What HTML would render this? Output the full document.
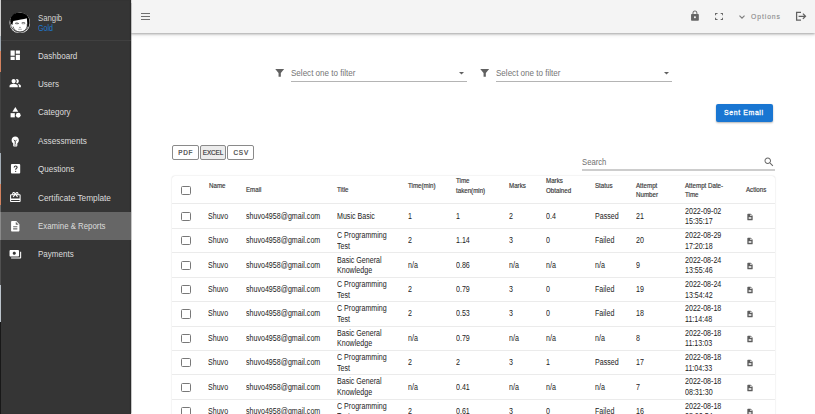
<!DOCTYPE html>
<html><head><meta charset="utf-8">
<style>
*{margin:0;padding:0;box-sizing:border-box}
html,body{width:815px;height:414px;overflow:hidden;background:#fff;font-family:"Liberation Sans",sans-serif}
.a{position:absolute}
#side{position:absolute;left:0;top:0;width:131px;height:414px;background:#353535;box-shadow:inset -1px 0 1px rgba(0,0,0,.2),.6px 0 1px rgba(0,0,0,.22);z-index:5}
#side .hdiv{position:absolute;left:0;top:40px;width:131px;height:1px;background:#404040}
.nav{position:absolute;left:0;width:131px;height:28.4px}
.nav.sel{background:#666}
.nav span{position:absolute;left:37.7px;top:.35px;line-height:28.4px;font-size:9.3px;color:#dcdcdc;white-space:nowrap;transform:scaleX(.865);transform-origin:0 0}
.nav svg{position:absolute}
#hdr{position:absolute;left:131px;top:0;width:684px;height:32.6px;background:#f4f4f4;box-shadow:0 1.3px 2.4px rgba(0,0,0,.32),0 2px 5px rgba(0,0,0,.08)}
.t{position:absolute;font-size:8.3px;line-height:10.4px;color:#222;white-space:nowrap;transform:scaleX(.855);transform-origin:0 0}
.th{position:absolute;font-size:6.5px;line-height:9.2px;color:#333;font-weight:normal;-webkit-text-stroke:.18px #4a4a4a;margin-top:.3px;white-space:nowrap;transform:scaleX(.95);transform-origin:0 0}
.hl{position:absolute;left:172px;width:603px;height:1px;background:#ebebeb}
.cb{position:absolute;width:9.4px;height:9.1px;border:1.25px solid #787878;border-radius:1.5px}
.ic{position:absolute}
#paper{position:absolute;left:171.5px;top:175.8px;width:603.7px;height:260px;border-radius:3px;background:#fff;box-shadow:0 0 1.5px rgba(0,0,0,.22)}
.sel1{position:absolute;font-size:8.7px;color:#757575;white-space:nowrap;transform:scaleX(.927);transform-origin:0 0}
.ul{position:absolute;height:1px;background:#b4b4b4}
.xb{position:absolute;top:145px;height:14.6px;border:1px solid #8a8a8a;border-radius:2px;font-size:6.3px;line-height:14.2px;text-align:center;color:#444;font-weight:bold}
</style></head><body>
<div id="side">
  <svg class="a" style="left:8.7px;top:11.8px;width:21.6px;height:21.6px" viewBox="0 0 40 40">
    <circle cx="20" cy="20" r="19.2" fill="#f2f2f2"/>
    <circle cx="20" cy="20" r="17.6" fill="#fff" stroke="#1a1a1a" stroke-width="1.4"/>
    <path d="M2.5 14 C4 5 11 1.5 20 1.5 C30 1.5 37 7 37.5 16 L37 26 L34 27 C34 21 33.5 15 33 11.5 C27 13 18 15 8 16.5 C7 19 6.5 21 6.5 24 L4 22 Z" fill="#000"/>
    <path d="M11.5 21 q3 -1.2 6.5 .3 M23.5 20.5 q3.3 -1.2 6.5 .2" fill="none" stroke="#2a2a2a" stroke-width="1.8"/>
    <path d="M12.5 22.6 h4.5 M24.5 22.4 h4.5" stroke="#999" stroke-width=".9"/>
    <path d="M18.6 28.5 h3.4" stroke="#555" stroke-width="1.1"/>
    <path d="M17 32 h6.8" stroke="#777" stroke-width="1.2"/>
    <path d="M33 22 l3.5 1 -.5 4 -3 1z" fill="#222"/>
    <path d="M7.5 27 C9 33 14 37 20.5 37 C27 37 32 33 33.5 27" fill="none" stroke="#222" stroke-width="1.3"/>
  </svg>
  <div class="a" style="left:37.8px;top:12.9px;font-size:8.7px;color:#d4d4d4;transform:scaleX(.894);transform-origin:0 0">Sangib</div>
  <div class="a" style="left:37.6px;top:22.6px;font-size:8.3px;color:#1e78d0;transform:scaleX(.86);transform-origin:0 0">Gold</div>
  <div class="hdiv"></div>
  <div class="a" style="left:0;top:0;width:1px;height:36px;background:#cfcfcf"></div>
  <div class="a" style="left:0;top:36px;width:1px;height:15px;background:#a3adb6"></div>
  <div class="a" style="left:0;top:51px;width:1px;height:21px;background:#d4825f"></div>
  <div class="a" style="left:0;top:153px;width:1px;height:31px;background:#a3adb6"></div>
  <div class="a" style="left:0;top:184px;width:1px;height:21px;background:#d4825f"></div>
  <div class="a" style="left:0;top:205px;width:1px;height:7px;background:#6a6a6a"></div>
  <div class="a" style="left:0;top:72px;width:1px;height:81px;background:#424242"></div>
  <div class="a" style="left:0;top:212px;width:1px;height:28px;background:#8a8a8a;z-index:3"></div>
  <div class="a" style="left:0;top:240px;width:1px;height:45px;background:#505050"></div>
  <div class="a" style="left:0;top:285px;width:1px;height:37px;background:#bcc4cc"></div>
  <div class="a" style="left:0;top:322px;width:1px;height:92px;background:#181818"></div>

  <div class="nav" style="top:41.2px"><svg style="left:9.1px;top:7.9px;width:12.5px;height:12.5px" viewBox="0 0 24 24"><path fill="#fff" d="M3 13h8V3H3v10zm0 8h8v-6H3v6zm10 0h8V11h-8v10zm0-18v6h8V3h-8z"/></svg><span>Dashboard</span></div>
  <div class="nav" style="top:69.6px"><svg style="left:9.3px;top:7.8px;width:12.4px;height:12.4px" viewBox="0 0 24 24"><path fill="#fff" d="M16.67 13.13C18.04 14.06 19 15.32 19 17v3h4v-3c0-2.18-3.57-3.47-6.33-3.87zM15 12c2.21 0 4-1.79 4-4s-1.79-4-4-4c-.47 0-.91.1-1.33.24C14.5 5.27 15 6.58 15 8s-.5 2.73-1.33 3.76c.42.14.86.24 1.330.24zM9 12c2.21 0 4-1.79 4-4s-1.79-4-4-4-4 1.79-4 4 1.79 4 4 4zM9 13c-2.67 0-8 1.34-8 4v3h16v-3c0-2.66-5.33-4-8-4z"/></svg><span>Users</span></div>
  <div class="nav" style="top:98px"><svg style="left:8.8px;top:7.8px;width:12.7px;height:12.7px" viewBox="0 0 24 24"><path fill="#fff" d="M12 2l-5.5 9h11z"/><circle fill="#fff" cx="17.5" cy="17.5" r="4.5"/><path fill="#fff" d="M3 13.5h8v8H3z"/></svg><span>Category</span></div>
  <div class="nav" style="top:126.4px"><svg style="left:9.3px;top:8.2px;width:12.5px;height:12.5px" viewBox="0 0 24 24"><path fill="#fff" d="M12 3c-3.9 0-7 3.1-7 7 0 2.4 1.2 4.5 3 5.7V20c0 1.1.9 2 2 2h4c1.1 0 2-.9 2-2v-4.3c1.8-1.3 3-3.4 3-5.7 0-3.9-3.1-7-7-7z"/><path fill="none" stroke="#353535" stroke-width="1.7" d="M9.4 9.2l2.6 3.2 2.6-3.2M12 12.4v5"/><path stroke="#353535" stroke-width="1.1" d="M9.5 19.3h5"/></svg><span style="transform:scaleX(.885)">Assessments</span></div>
  <div class="nav" style="top:154.8px"><svg style="left:9.6px;top:8.7px;width:11.4px;height:11.4px" viewBox="0 0 24 24"><rect x="2" y="2" width="19.5" height="20" rx="2" fill="#fff"/><path fill="none" stroke="#353535" stroke-width="2.3" d="M8.8 9.4c0-1.9 1.4-3.2 3.1-3.2 1.8 0 3.1 1.2 3.1 2.8 0 2.3-3.1 2.4-3.1 5"/><circle cx="11.9" cy="17.6" r="1.35" fill="#353535"/></svg><span>Questions</span></div>
  <div class="nav" style="top:183.2px"><svg style="left:8.8px;top:8.0px;width:12.7px;height:12.7px" viewBox="0 0 24 24"><path fill="#fff" d="M20 6h-2.18c.11-.31.18-.65.18-1 0-1.66-1.34-3-3-3-1.05 0-1.96.54-2.5 1.35l-.5.67-.5-.68C10.96 2.54 10.05 2 9 2 7.34 2 6 3.34 6 5c0 .35.07.69.18 1H4c-1.11 0-1.99.89-1.99 2L2 19c0 1.11.89 2 2 2h16c1.11 0 2-.89 2-2V8c0-1.11-.89-2-2-2zm-5-2c.55 0 1 .45 1 1s-.45 1-1 1-1-.45-1-1 .45-1 1-1zM9 4c.55 0 1 .45 1 1s-.45 1-1 1-1-.45-1-1 .45-1 1-1zm11 15H4v-2h16v2zm0-5H4V8h5.08L7 10.83 8.62 12 11 8.76l1-1.36 1 1.36L15.38 12 17 10.83 14.92 8H20v6z"/></svg><span style="transform:scaleX(.89)">Certificate Template</span></div>
  <div class="nav sel" style="top:211.6px"><svg style="left:9px;top:8.1px;width:12.5px;height:12.5px" viewBox="0 0 24 24"><path fill="#fff" d="M14 2H6c-1.1 0-1.99.9-1.99 2L4 20c0 1.1.89 2 1.99 2H18c1.1 0 2-.9 2-2V8l-6-6zm2 16H8v-2h8v2zm0-4H8v-2h8v2zm-3-5V3.5L18.5 9H13z"/></svg><span style="transform:scaleX(.843)">Examine &amp; Reports</span></div>
  <div class="nav" style="top:240px"><svg style="left:8.9px;top:8.1px;width:12.7px;height:12.7px" viewBox="0 0 24 24"><path fill="#fff" d="M19 14V6c0-1.1-.9-2-2-2H3c-1.1 0-2 .9-2 2v8c0 1.1.9 2 2 2h14c1.1 0 2-.9 2-2zm-9-1c-1.66 0-3-1.34-3-3s1.34-3 3-3 3 1.34 3 3-1.34 3-3 3zm13-6v11c0 1.1-.9 2-2 2H4v-2h17V7h2z"/></svg><span>Payments</span></div>
</div>

<div id="hdr">
  <svg class="a" style="left:10px;top:12px;width:9.4px;height:8px" viewBox="0 0 9.4 8"><path stroke="#707070" stroke-width="1.15" d="M0 1.5h9.4M0 4.5h9.4M0 7.5h9.4"/></svg>
  <!-- lock -->
  <svg class="a" style="left:557.5px;top:10.3px;width:11.9px;height:11.7px" viewBox="0 0 24 24"><path fill="#666" d="M18 8h-1V6c0-2.76-2.24-5-5-5S7 3.24 7 6v2H6c-1.1 0-2 .9-2 2v10c0 1.1.9 2 2 2h12c1.1 0 2-.9 2-2V10c0-1.1-.9-2-2-2zm-6 9c-1.1 0-2-.9-2-2s.9-2 2-2 2 .9 2 2-.9 2-2 2zm3.1-9H8.9V6c0-1.71 1.39-3.1 3.1-3.1 1.71 0 3.1 1.39 3.1 3.1v2z"/></svg>
  <!-- fullscreen -->
  <svg class="a" style="left:583.8px;top:12.9px;width:8.2px;height:7px" viewBox="0 0 8.2 7"><path fill="none" stroke="#6a6a6a" stroke-width="1.1" d="M.55 2.3V.55h2M5.7.55h1.95v1.75M7.65 4.7v1.75H5.7M2.55 6.45H.55V4.7"/></svg>
  <!-- chevron -->
  <svg class="a" style="left:607.8px;top:14.7px;width:6.2px;height:4px" viewBox="0 0 6.4 4.2"><path fill="none" stroke="#7e7e7e" stroke-width="1.2" d="M.45 .55l2.65 2.75 2.65-2.75"/></svg>
  <div class="a" style="left:620.2px;top:11.8px;font-size:8.1px;color:#888;letter-spacing:1.1px;-webkit-text-stroke:.15px #999;transform:scaleX(.84);transform-origin:0 0">Options</div>
  <!-- logout -->
  <svg class="a" style="left:664px;top:6px;width:14px;height:20px" viewBox="0 0 14 20"><path fill="none" stroke="#616161" stroke-width="1.25" d="M6 6.4H1.6v7.7H6"/><path fill="none" stroke="#616161" stroke-width="1.25" d="M3.6 10.25h6.6M7.9 7.6l2.6 2.65-2.6 2.65"/></svg>
</div>

<!-- filters -->
<svg class="a" style="left:274.2px;top:67.4px;width:11.4px;height:11.4px" viewBox="0 0 24 24"><path fill="#616161" d="M2.6 4h18.8l-7 8.4v8.1h-4.8v-8.1z"/></svg>
<div class="sel1" style="left:291px;top:68.4px">Select one to filter</div>
<svg class="a" style="left:458.6px;top:72px;width:5px;height:2.6px" viewBox="0 0 10 5"><path fill="#616161" d="M0 0h10L5 5z"/></svg>
<div class="ul" style="left:291px;top:81px;width:176px"></div>
<svg class="a" style="left:479.2px;top:67.4px;width:11.4px;height:11.4px" viewBox="0 0 24 24"><path fill="#616161" d="M2.6 4h18.8l-7 8.4v8.1h-4.8v-8.1z"/></svg>
<div class="sel1" style="left:496px;top:68.4px">Select one to filter</div>
<svg class="a" style="left:663.6px;top:72px;width:5px;height:2.6px" viewBox="0 0 10 5"><path fill="#616161" d="M0 0h10L5 5z"/></svg>
<div class="ul" style="left:496px;top:81px;width:176px"></div>

<!-- send email -->
<div class="a" style="left:715.5px;top:103.6px;width:57.2px;height:18.2px;background:#1976d2;border-radius:2px;box-shadow:0 1px 2px rgba(0,0,0,.3)"></div>
<div class="a" style="left:724.2px;top:108.2px;font-size:8px;color:#fff;-webkit-text-stroke:.3px #fff;letter-spacing:.75px;white-space:nowrap;transform:scaleX(.86);transform-origin:0 0">Sent Email</div>

<!-- export buttons -->
<div class="xb" style="left:172.2px;width:26.4px;letter-spacing:.75px;font-weight:normal;-webkit-text-stroke:.22px #444;text-indent:.6px">PDF</div>
<div class="xb" style="left:199.7px;width:26.5px;background:#ececec;font-weight:normal;font-size:6.4px;-webkit-text-stroke:.15px #333;color:#333;letter-spacing:-.15px">EXCEL</div>
<div class="xb" style="left:227.3px;width:27.2px;letter-spacing:.95px;font-weight:normal;-webkit-text-stroke:.22px #444;text-indent:.8px">CSV</div>

<!-- search -->
<div class="a" style="left:582px;top:156.8px;font-size:8.9px;color:#707070;transform:scaleX(.868);transform-origin:0 0">Search</div>
<svg class="a" style="left:762.8px;top:155.7px;width:12px;height:12px" viewBox="0 0 24 24"><path fill="#666" d="M15.5 14h-.79l-.28-.27C15.41 12.59 16 11.11 16 9.5 16 5.91 13.09 3 9.5 3S3 5.91 3 9.5 5.91 16 9.5 16c1.61 0 3.090-.59 4.23-1.57l.27.28v.79l5 4.99L20.49 19l-4.99-5zm-6 0C7.01 14 5 11.99 5 9.5S7.01 5 9.5 5 14 7.01 14 9.5 11.99 14 9.5 14z"/></svg>
<div class="ul" style="left:582px;top:169.2px;width:193px;background:#cdcdcd;height:1.5px"></div>

<div id="paper"></div>
<!-- table header -->
<div class="cb" style="left:181.2px;top:185.6px;height:9.3px"></div>
<div class="th" style="left:208.5px;top:180.7px">Name</div>
<div class="th" style="left:245.9px;top:185.1px">Email</div>
<div class="th" style="left:337px;top:185.1px">Title</div>
<div class="th" style="left:408px;top:180.7px">Time(min)</div>
<div class="th" style="left:455.7px;top:176.2px">Time<br>taken(min)</div>
<div class="th" style="left:509.2px;top:180.7px">Marks</div>
<div class="th" style="left:545.5px;top:176.2px">Marks<br>Obtained</div>
<div class="th" style="left:595px;top:180.7px">Status</div>
<div class="th" style="left:636px;top:180.7px">Attempt<br>Number</div>
<div class="th" style="left:684.7px;top:180.7px">Attempt Date-<br>Time</div>
<div class="th" style="left:745.5px;top:185.1px">Actions</div>
<div class="hl" style="top:203.2px"></div>
<div class="hl" style="top:228.06px"></div>
<div class="cb" style="left:181.3px;top:211.98px"></div>
<div class="t" style="left:208.4px;top:211.03px">Shuvo</div>
<div class="t" style="left:245.8px;top:211.03px">shuvo4958@gmail.com</div>
<div class="t" style="left:337.2px;top:211.03px">Music Basic</div>
<div class="t" style="left:408.2px;top:211.03px">1</div>
<div class="t" style="left:455.8px;top:211.03px">1</div>
<div class="t" style="left:509.3px;top:211.03px">2</div>
<div class="t" style="left:545.5px;top:211.03px">0.4</div>
<div class="t" style="left:595.0px;top:211.03px">Passed</div>
<div class="t" style="left:635.8px;top:211.03px">21</div>
<div class="t" style="left:684.8px;top:205.83px;line-height:10.6px">2022-09-02<br>15:35:17</div>
<svg class="ic" style="left:745.7px;top:212.98px;width:8px;height:8px" viewBox="0 0 24 24"><path fill="#5c5c5c" d="M14 2H6c-1.1 0-1.99.9-1.99 2L4 20c0 1.1.89 2 1.99 2H18c1.1 0 2-.9 2-2V8l-6-6zm2 16H8v-2h8v2zm0-4H8v-2h8v2zm-3-5V3.5L18.5 9H13z"/></svg>
<div class="hl" style="top:252.42px"></div>
<div class="cb" style="left:181.3px;top:236.34px"></div>
<div class="t" style="left:208.4px;top:235.39px">Shuvo</div>
<div class="t" style="left:245.8px;top:235.39px">shuvo4958@gmail.com</div>
<div class="t" style="left:337.2px;top:230.19px;line-height:10.6px">C Programming<br>Test</div>
<div class="t" style="left:408.2px;top:235.39px">2</div>
<div class="t" style="left:455.8px;top:235.39px">1.14</div>
<div class="t" style="left:509.3px;top:235.39px">3</div>
<div class="t" style="left:545.5px;top:235.39px">0</div>
<div class="t" style="left:595.0px;top:235.39px">Failed</div>
<div class="t" style="left:635.8px;top:235.39px">20</div>
<div class="t" style="left:684.8px;top:230.19px;line-height:10.6px">2022-08-29<br>17:20:18</div>
<svg class="ic" style="left:745.7px;top:237.34px;width:8px;height:8px" viewBox="0 0 24 24"><path fill="#5c5c5c" d="M14 2H6c-1.1 0-1.99.9-1.99 2L4 20c0 1.1.89 2 1.99 2H18c1.1 0 2-.9 2-2V8l-6-6zm2 16H8v-2h8v2zm0-4H8v-2h8v2zm-3-5V3.5L18.5 9H13z"/></svg>
<div class="hl" style="top:276.78px"></div>
<div class="cb" style="left:181.3px;top:260.70px"></div>
<div class="t" style="left:208.4px;top:259.75px">Shuvo</div>
<div class="t" style="left:245.8px;top:259.75px">shuvo4958@gmail.com</div>
<div class="t" style="left:337.2px;top:254.55px;line-height:10.6px">Basic General<br>Knowledge</div>
<div class="t" style="left:408.2px;top:259.75px">n/a</div>
<div class="t" style="left:455.8px;top:259.75px">0.86</div>
<div class="t" style="left:509.3px;top:259.75px">n/a</div>
<div class="t" style="left:545.5px;top:259.75px">n/a</div>
<div class="t" style="left:595.0px;top:259.75px">n/a</div>
<div class="t" style="left:635.8px;top:259.75px">9</div>
<div class="t" style="left:684.8px;top:254.55px;line-height:10.6px">2022-08-24<br>13:55:46</div>
<svg class="ic" style="left:745.7px;top:261.7px;width:8px;height:8px" viewBox="0 0 24 24"><path fill="#5c5c5c" d="M14 2H6c-1.1 0-1.99.9-1.99 2L4 20c0 1.1.89 2 1.99 2H18c1.1 0 2-.9 2-2V8l-6-6zm2 16H8v-2h8v2zm0-4H8v-2h8v2zm-3-5V3.5L18.5 9H13z"/></svg>
<div class="hl" style="top:301.14px"></div>
<div class="cb" style="left:181.3px;top:285.06px"></div>
<div class="t" style="left:208.4px;top:284.11px">Shuvo</div>
<div class="t" style="left:245.8px;top:284.11px">shuvo4958@gmail.com</div>
<div class="t" style="left:337.2px;top:278.91px;line-height:10.6px">C Programming<br>Test</div>
<div class="t" style="left:408.2px;top:284.11px">2</div>
<div class="t" style="left:455.8px;top:284.11px">0.79</div>
<div class="t" style="left:509.3px;top:284.11px">3</div>
<div class="t" style="left:545.5px;top:284.11px">0</div>
<div class="t" style="left:595.0px;top:284.11px">Failed</div>
<div class="t" style="left:635.8px;top:284.11px">19</div>
<div class="t" style="left:684.8px;top:278.91px;line-height:10.6px">2022-08-24<br>13:54:42</div>
<svg class="ic" style="left:745.7px;top:286.06px;width:8px;height:8px" viewBox="0 0 24 24"><path fill="#5c5c5c" d="M14 2H6c-1.1 0-1.99.9-1.99 2L4 20c0 1.1.89 2 1.99 2H18c1.1 0 2-.9 2-2V8l-6-6zm2 16H8v-2h8v2zm0-4H8v-2h8v2zm-3-5V3.5L18.5 9H13z"/></svg>
<div class="hl" style="top:325.50px"></div>
<div class="cb" style="left:181.3px;top:309.42px"></div>
<div class="t" style="left:208.4px;top:308.47px">Shuvo</div>
<div class="t" style="left:245.8px;top:308.47px">shuvo4958@gmail.com</div>
<div class="t" style="left:337.2px;top:303.27px;line-height:10.6px">C Programming<br>Test</div>
<div class="t" style="left:408.2px;top:308.47px">2</div>
<div class="t" style="left:455.8px;top:308.47px">0.53</div>
<div class="t" style="left:509.3px;top:308.47px">3</div>
<div class="t" style="left:545.5px;top:308.47px">0</div>
<div class="t" style="left:595.0px;top:308.47px">Failed</div>
<div class="t" style="left:635.8px;top:308.47px">18</div>
<div class="t" style="left:684.8px;top:303.27px;line-height:10.6px">2022-08-18<br>11:14:48</div>
<svg class="ic" style="left:745.7px;top:310.42px;width:8px;height:8px" viewBox="0 0 24 24"><path fill="#5c5c5c" d="M14 2H6c-1.1 0-1.99.9-1.99 2L4 20c0 1.1.89 2 1.99 2H18c1.1 0 2-.9 2-2V8l-6-6zm2 16H8v-2h8v2zm0-4H8v-2h8v2zm-3-5V3.5L18.5 9H13z"/></svg>
<div class="hl" style="top:349.86px"></div>
<div class="cb" style="left:181.3px;top:333.78px"></div>
<div class="t" style="left:208.4px;top:332.83px">Shuvo</div>
<div class="t" style="left:245.8px;top:332.83px">shuvo4958@gmail.com</div>
<div class="t" style="left:337.2px;top:327.63px;line-height:10.6px">Basic General<br>Knowledge</div>
<div class="t" style="left:408.2px;top:332.83px">n/a</div>
<div class="t" style="left:455.8px;top:332.83px">0.79</div>
<div class="t" style="left:509.3px;top:332.83px">n/a</div>
<div class="t" style="left:545.5px;top:332.83px">n/a</div>
<div class="t" style="left:595.0px;top:332.83px">n/a</div>
<div class="t" style="left:635.8px;top:332.83px">8</div>
<div class="t" style="left:684.8px;top:327.63px;line-height:10.6px">2022-08-18<br>11:13:03</div>
<svg class="ic" style="left:745.7px;top:334.78000000000003px;width:8px;height:8px" viewBox="0 0 24 24"><path fill="#5c5c5c" d="M14 2H6c-1.1 0-1.99.9-1.99 2L4 20c0 1.1.89 2 1.99 2H18c1.1 0 2-.9 2-2V8l-6-6zm2 16H8v-2h8v2zm0-4H8v-2h8v2zm-3-5V3.5L18.5 9H13z"/></svg>
<div class="hl" style="top:374.22px"></div>
<div class="cb" style="left:181.3px;top:358.14px"></div>
<div class="t" style="left:208.4px;top:357.19px">Shuvo</div>
<div class="t" style="left:245.8px;top:357.19px">shuvo4958@gmail.com</div>
<div class="t" style="left:337.2px;top:351.99px;line-height:10.6px">C Programming<br>Test</div>
<div class="t" style="left:408.2px;top:357.19px">2</div>
<div class="t" style="left:455.8px;top:357.19px">2</div>
<div class="t" style="left:509.3px;top:357.19px">3</div>
<div class="t" style="left:545.5px;top:357.19px">1</div>
<div class="t" style="left:595.0px;top:357.19px">Passed</div>
<div class="t" style="left:635.8px;top:357.19px">17</div>
<div class="t" style="left:684.8px;top:351.99px;line-height:10.6px">2022-08-18<br>11:04:33</div>
<svg class="ic" style="left:745.7px;top:359.14000000000004px;width:8px;height:8px" viewBox="0 0 24 24"><path fill="#5c5c5c" d="M14 2H6c-1.1 0-1.99.9-1.99 2L4 20c0 1.1.89 2 1.99 2H18c1.1 0 2-.9 2-2V8l-6-6zm2 16H8v-2h8v2zm0-4H8v-2h8v2zm-3-5V3.5L18.5 9H13z"/></svg>
<div class="hl" style="top:398.58px"></div>
<div class="cb" style="left:181.3px;top:382.50px"></div>
<div class="t" style="left:208.4px;top:381.55px">Shuvo</div>
<div class="t" style="left:245.8px;top:381.55px">shuvo4958@gmail.com</div>
<div class="t" style="left:337.2px;top:376.35px;line-height:10.6px">Basic General<br>Knowledge</div>
<div class="t" style="left:408.2px;top:381.55px">n/a</div>
<div class="t" style="left:455.8px;top:381.55px">0.41</div>
<div class="t" style="left:509.3px;top:381.55px">n/a</div>
<div class="t" style="left:545.5px;top:381.55px">n/a</div>
<div class="t" style="left:595.0px;top:381.55px">n/a</div>
<div class="t" style="left:635.8px;top:381.55px">7</div>
<div class="t" style="left:684.8px;top:376.35px;line-height:10.6px">2022-08-18<br>08:31:30</div>
<svg class="ic" style="left:745.7px;top:383.5px;width:8px;height:8px" viewBox="0 0 24 24"><path fill="#5c5c5c" d="M14 2H6c-1.1 0-1.99.9-1.99 2L4 20c0 1.1.89 2 1.99 2H18c1.1 0 2-.9 2-2V8l-6-6zm2 16H8v-2h8v2zm0-4H8v-2h8v2zm-3-5V3.5L18.5 9H13z"/></svg>
<div class="hl" style="top:422.94px"></div>
<div class="cb" style="left:181.3px;top:406.86px"></div>
<div class="t" style="left:208.4px;top:405.91px">Shuvo</div>
<div class="t" style="left:245.8px;top:405.91px">shuvo4958@gmail.com</div>
<div class="t" style="left:337.2px;top:400.71px;line-height:10.6px">C Programming<br>Test</div>
<div class="t" style="left:408.2px;top:405.91px">2</div>
<div class="t" style="left:455.8px;top:405.91px">0.61</div>
<div class="t" style="left:509.3px;top:405.91px">3</div>
<div class="t" style="left:545.5px;top:405.91px">0</div>
<div class="t" style="left:595.0px;top:405.91px">Failed</div>
<div class="t" style="left:635.8px;top:405.91px">16</div>
<div class="t" style="left:684.8px;top:400.71px;line-height:10.6px">2022-08-18<br>08:26:54</div>
<svg class="ic" style="left:745.7px;top:407.86px;width:8px;height:8px" viewBox="0 0 24 24"><path fill="#5c5c5c" d="M14 2H6c-1.1 0-1.99.9-1.99 2L4 20c0 1.1.89 2 1.99 2H18c1.1 0 2-.9 2-2V8l-6-6zm2 16H8v-2h8v2zm0-4H8v-2h8v2zm-3-5V3.5L18.5 9H13z"/></svg>
</body></html>
